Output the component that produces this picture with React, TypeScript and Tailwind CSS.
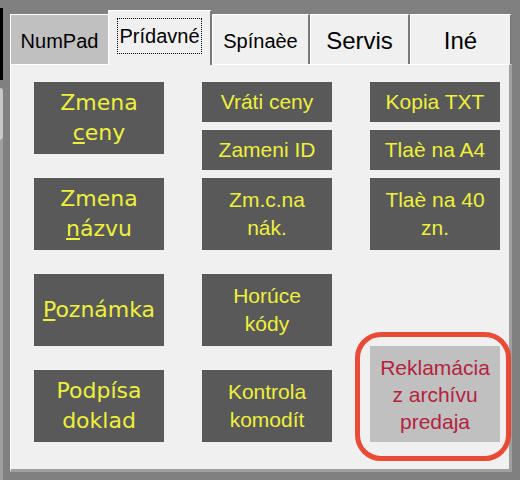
import React from 'react';

const sans = { fontFamily: '"Liberation Sans", Arial, sans-serif' };
const wide = { fontFamily: '"DejaVu Sans", Verdana, sans-serif' };

function BigButton({ children }: { children: React.ReactNode }) {
  return (
    <div
      className="flex h-[72px] w-[130px] flex-col items-center justify-center bg-[#595959] text-center text-[22px] leading-[30px] text-[#eef03c]"
      style={wide}
    >
      {children}
    </div>
  );
}

function SmallButton({ children, tall }: { children: React.ReactNode; tall?: boolean }) {
  return (
    <div
      className={
        tall
          ? 'flex h-[72px] w-[130px] flex-col items-center justify-center bg-[#595959] text-center text-[21px] leading-[28px] text-[#eef03c]'
          : 'flex h-[40px] w-[130px] flex-col items-center justify-center bg-[#595959] text-center text-[21px] leading-[28px] text-[#eef03c]'
      }
      style={sans}
    >
      {children}
    </div>
  );
}

export default function App() {
  return (
    <div className="relative flex h-[480px] w-[520px] overflow-hidden bg-[#808080]">
      {/* left window edge */}
      <div className="flex w-[3px] flex-col">
        <div className="mt-[8px] h-[72px] bg-black" />
        <div className="mt-[8px] h-[52px] rounded-r-sm bg-[#c8c8c8]" />
        <div className="flex-1 bg-[#a0a0a0]" />
      </div>

      {/* tab control */}
      <div className="ml-[7px] flex w-[502px] flex-col pt-[10px]">
        <div className="relative z-10 flex h-[54px] items-end" style={sans}>
          <div className="flex h-[50px] w-[98px] items-center justify-center border-l border-t border-white bg-[#c0c0c0] pt-[2px] text-[20px] text-black">
            NumPad
          </div>
          <div className="-mb-px flex h-[55px] w-[104px] items-start justify-center border-l border-r-2 border-t border-l-white border-r-[#7a7a7a] border-t-white bg-[#f0f0f0] pt-[7px] text-[20px] text-black">
            <span className="border border-dotted border-black px-[1px] leading-[34px]">Prídavné</span>
          </div>
          <div className="flex h-[50px] w-[98px] items-center justify-center border-l border-r-2 border-t border-l-white border-r-[#7a7a7a] border-t-white bg-[#f0f0f0] pt-[2px] text-[20px] text-black">
            Spínaèe
          </div>
          <div className="flex h-[50px] w-[100px] items-center justify-center border-l border-r-2 border-t border-l-white border-r-[#7a7a7a] border-t-white bg-[#f0f0f0] pt-[2px] text-[24px] text-black">
            Servis
          </div>
          <div className="flex h-[50px] w-[102px] items-center justify-center border-l border-r-2 border-t border-l-white border-r-[#7a7a7a] border-t-white bg-[#f0f0f0] pt-[2px] text-[24px] text-black">
            Iné
          </div>
        </div>

        {/* panel */}
        <div className="flex h-[408px] gap-[38px] border-b-[3px] border-l border-r-[3px] border-t border-b-[#a0a0a0] border-l-white border-r-[#a0a0a0] border-t-white bg-[#f0f0f0] pl-[23px] pt-[17px]">
          <div className="flex flex-col gap-[24px]">
            <BigButton>
              <span>Zmena</span>
              <span>
                <u className="decoration-2 underline-offset-2">c</u>eny
              </span>
            </BigButton>
            <BigButton>
              <span>Zmena</span>
              <span>
                <u className="decoration-2 underline-offset-2">n</u>ázvu
              </span>
            </BigButton>
            <BigButton>
              <span>
                <u className="decoration-2 underline-offset-2">P</u>oznámka
              </span>
            </BigButton>
            <BigButton>
              <span>Podpísa</span>
              <span>doklad</span>
            </BigButton>
          </div>

          <div className="flex flex-col">
            <SmallButton>Vráti ceny</SmallButton>
            <div className="mt-[8px]">
              <SmallButton>Zameni ID</SmallButton>
            </div>
            <div className="mt-[8px]">
              <SmallButton tall>
                <span>Zm.c.na</span>
                <span>nák.</span>
              </SmallButton>
            </div>
            <div className="mt-[24px]">
              <SmallButton tall>
                <span>Horúce</span>
                <span>kódy</span>
              </SmallButton>
            </div>
            <div className="mt-[24px]">
              <SmallButton tall>
                <span>Kontrola</span>
                <span>komodít</span>
              </SmallButton>
            </div>
          </div>

          <div className="flex flex-col">
            <SmallButton>Kopia TXT</SmallButton>
            <div className="mt-[8px]">
              <SmallButton>Tlaè na A4</SmallButton>
            </div>
            <div className="mt-[8px]">
              <SmallButton tall>
                <span>Tlaè na 40</span>
                <span>zn.</span>
              </SmallButton>
            </div>
            <div
              className="mt-[96px] flex h-[96px] w-[130px] flex-col items-center justify-center bg-[#c0c0c0] text-center text-[21px] leading-[27px] text-[#b4233e]"
              style={sans}
            >
              <span>Reklamácia</span>
              <span>z archívu</span>
              <span>predaja</span>
            </div>
          </div>
        </div>
      </div>

      {/* hand-drawn red annotation */}
      <div className="pointer-events-none absolute left-[355px] top-[332px] h-[129px] w-[156px] rounded-[26px] border-[5px] border-[#e8412b] opacity-95" />
    </div>
  );
}
